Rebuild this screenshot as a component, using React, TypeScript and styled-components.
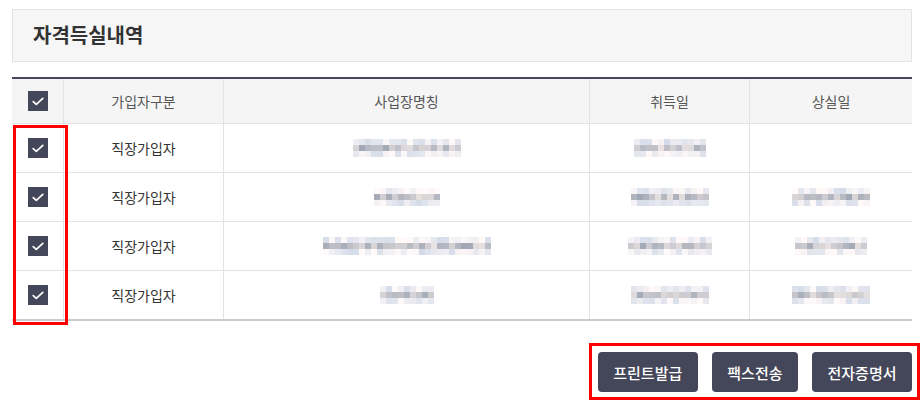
import React from "react";
import styled, { createGlobalStyle } from "styled-components";

const GlobalStyle = createGlobalStyle`
  html, body { margin: 0; padding: 0; background: #fff; }
  body { font-family: "Noto Sans CJK KR", "Noto Sans", sans-serif; color: #333; }
  * { box-sizing: border-box; }
`;

const Page = styled.div`
  padding: 9px 12px 14px 12px;
`;

const TitleBox = styled.div`
  width: 900px;
  height: 53px;
  background: #f6f6f6;
  border: 1px solid #e3e3e3;
  display: flex;
  align-items: center;
  padding-left: 20px;
  padding-bottom: 2px;
`;

const Title = styled.h2`
  margin: 0;
  font-size: 20px;
  font-weight: 700;
  color: #333;
`;

const TableWrap = styled.div`
  position: relative;
  margin-top: 15px;
  width: 900px;
  border-top: 2px solid #444659;
  border-bottom: 2px solid #cacacf;
`;

const Row = styled.div<{ $head?: boolean; $last?: boolean }>`
  display: grid;
  grid-template-columns: 52px 160px 366px 160px 1fr;
  height: ${(p) => (p.$head ? 45 : p.$last ? 48 : 49)}px;
  background: ${(p) => (p.$head ? "#f5f5f5" : "#fff")};
  border-bottom: ${(p) => (p.$last ? "none" : "1px solid #e2e2e7")};
`;

const Cell = styled.div<{ $head?: boolean }>`
  display: flex;
  align-items: center;
  justify-content: center;
  border-right: 1px solid #e2e2e7;
  font-size: 14px;
  color: ${(p) => (p.$head ? "#555" : "#333")};
  &:last-child { border-right: none; }
`;

const Check = styled.span`
  width: 20px;
  height: 20px;
  background: #444659;
  display: inline-flex;
  align-items: center;
  justify-content: center;
`;

const MosaicGrid = styled.div<{ $cols: number }>`
  display: grid;
  grid-template-columns: repeat(${(p) => p.$cols}, 6px);
  grid-auto-rows: 6px;
  filter: blur(0.3px);
`;

const Highlight = styled.div`
  position: absolute;
  border: 3px solid #f00;
  pointer-events: none;
`;

const Actions = styled.div`
  display: flex;
  justify-content: flex-end;
  margin-top: 31px;
  width: 900px;
`;

const ButtonGroup = styled.div`
  position: relative;
  display: flex;
  gap: 14px;
`;

const Button = styled.button`
  height: 40px;
  padding: 0 15.5px;
  border: none;
  border-radius: 4px;
  background: #444659;
  color: #fff;
  font-family: "Noto Sans CJK KR", "Noto Sans", sans-serif;
  font-size: 15px;
  font-weight: 500;
  cursor: pointer;
`;

const CheckBox = () => (
  <Check>
    <svg width="12" height="9" viewBox="0 0 12 9">
      <path d="M1.2 4.6 L4.3 7.4 L10.8 1.4" fill="none" stroke="#fff" strokeWidth="1.7" strokeLinecap="round" strokeLinejoin="round" />
    </svg>
  </Check>
);

const Mosaic = ({ cols, seed }: { cols: number; seed: number }) => {
  const cells = [];
  for (let r = 0; r < 3; r++) {
    for (let c = 0; c < cols; c++) {
      const n = Math.abs(Math.sin((c + 1) * 12.9898 + (r + 1) * 78.233 + seed * 37.719) * 43758.5453) % 1;
      const base = r === 1 ? 168 + n * 58 : 220 + n * 30;
      const v = Math.round(base);
      const tint = Math.round((n - 0.5) * 14);
      cells.push(
        <span key={`${r}-${c}`} style={{ background: `rgb(${v + tint},${v},${v - tint + 6})` }} />
      );
    }
  }
  return <MosaicGrid $cols={cols}>{cells}</MosaicGrid>;
};

type Item = { name: number; acq: number; loss: number };

const rows: Item[] = [
  { name: 18, acq: 12, loss: 0 },
  { name: 11, acq: 13, loss: 13 },
  { name: 28, acq: 14, loss: 12 },
  { name: 9, acq: 13, loss: 13 },
];

export default function App() {
  return (
    <Page>
      <GlobalStyle />
      <TitleBox>
        <Title>자격득실내역</Title>
      </TitleBox>

      <TableWrap>
        <Row $head>
          <Cell $head><CheckBox /></Cell>
          <Cell $head>가입자구분</Cell>
          <Cell $head>사업장명칭</Cell>
          <Cell $head>취득일</Cell>
          <Cell $head>상실일</Cell>
        </Row>
        {rows.map((row, i) => (
          <Row key={i} $last={i === rows.length - 1}>
            <Cell><CheckBox /></Cell>
            <Cell>직장가입자</Cell>
            <Cell><Mosaic cols={row.name} seed={i * 3 + 1} /></Cell>
            <Cell><Mosaic cols={row.acq} seed={i * 3 + 2} /></Cell>
            <Cell>{row.loss > 0 && <Mosaic cols={row.loss} seed={i * 3 + 3} />}</Cell>
          </Row>
        ))}
        <Highlight style={{ left: 1, top: 46, width: 55, height: 200 }} />
      </TableWrap>

      <Actions>
        <ButtonGroup>
          <Button>프린트발급</Button>
          <Button>팩스전송</Button>
          <Button>전자증명서</Button>
          <Highlight style={{ left: -9, right: -8, top: -9, bottom: -8 }} />
        </ButtonGroup>
      </Actions>
    </Page>
  );
}
